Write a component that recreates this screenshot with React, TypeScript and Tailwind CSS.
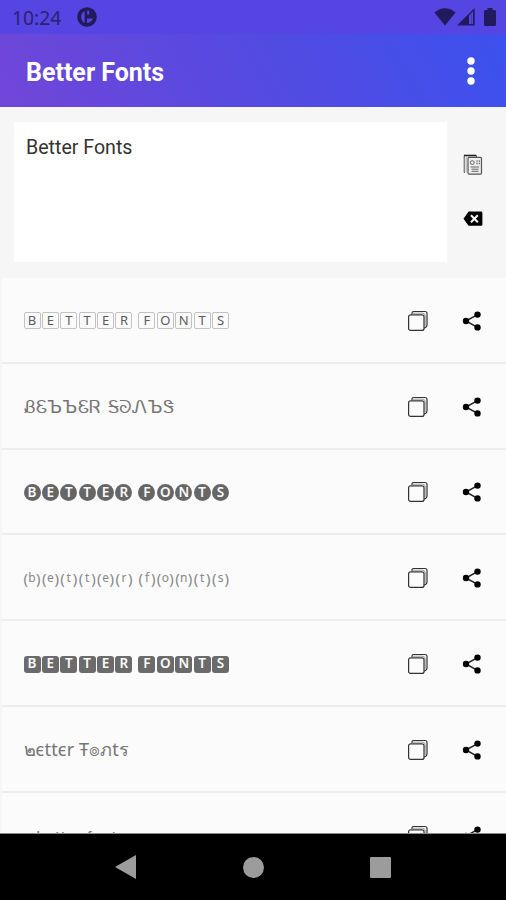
import type { ReactNode } from "react";

type TileKind = "box" | "circle" | "paren" | "solid";

const TILE_STYLES: Record<TileKind, string> = {
  box: "h-[17px] border border-[#c2c2c2] rounded-[2px] text-[#5c5c5c] text-[13px]",
  circle: "h-[17px] rounded-full bg-[#666666] text-[#fafafa] text-[13.5px] font-semibold",
  paren: "h-[17px] text-[#888888] text-[12px]",
  solid: "h-[17px] rounded-[3px] bg-[#6b6b6b] text-[#fafafa] text-[13.5px] font-semibold",
};

function Tiles({ text, kind }: { text: string; kind: TileKind }) {
  return (
    <div className="flex gap-[6px] font-['Noto_Sans',sans-serif]">
      {text.split(" ").map(word => (
        <div key={word} className="flex gap-[1.4px]">
          {word.split("").map((c, i) => (
            <span key={i} className={`flex w-[17px] items-center justify-center leading-none ${TILE_STYLES[kind]}`}>
              {kind === "paren" ? (
                <>
                  <span className="text-[15px]">(</span>
                  <span className="flex w-[8px] justify-center">{c}</span>
                  <span className="text-[15px]">)</span>
                </>
              ) : c}
            </span>
          ))}
        </div>
      ))}
    </div>
  );
}

function CopyIcon() {
  return (
    <svg width="22" height="22" viewBox="0 0 22 22" fill="none" stroke="#333333" strokeWidth="1.2">
      <path d="M5 4V3.2Q5 1.5 6.7 1.5H18Q20 1.5 20 3.5V15Q20 17 18 17.8H17" />
      <path d="M6 3.2H15.5Q18.2 3.2 18.2 6V16" stroke="#888888" strokeWidth="0.8" />
      <rect x="1.6" y="4.8" width="15.4" height="15.6" rx="2" fill="#fbfbfb" />
    </svg>
  );
}

function ShareIcon() {
  return (
    <svg width="20" height="20" viewBox="0 0 20 20" fill="#000000">
      <path d="M15.5 3.6 4 10 15.5 16.4" fill="none" stroke="#222222" strokeWidth="1.5" />
      <circle cx="4" cy="10" r="3.2" />
      <circle cx="15.5" cy="3.6" r="3.2" />
      <circle cx="15.5" cy="16.4" r="3.2" />
    </svg>
  );
}

function PasteIcon() {
  return (
    <svg width="20" height="22" viewBox="0 0 20 22" fill="none" stroke="#555555">
      <path d="M2 18.5H1.2V1.5H13.5V3" strokeWidth="1" />
      <path d="M1 1.5H13" stroke="#222222" strokeWidth="1.6" />
      <path d="M3.2 3V18.5" stroke="#999999" strokeWidth="0.8" />
      <rect x="5" y="3.3" width="13.5" height="16.8" rx="1" fill="#eeeeee" strokeWidth="1.2" />
      <circle cx="9.3" cy="8.6" r="1.9" strokeWidth="0.9" />
      <path d="M14 6.3V10.8M16.3 6.3V10.8" strokeWidth="1" strokeDasharray="1.6 0.8" />
      <path d="M7.5 13H16M8.5 15.2H15.5M8.5 17.3H15.5" strokeWidth="0.9" />
    </svg>
  );
}

function BackspaceIcon() {
  return (
    <svg width="20" height="16" viewBox="0 0 20 16">
      <path d="M5.6 .6H18Q19.4 .6 19.4 2V13.4Q19.4 14.8 18 14.8H5.6L.5 7.7Z" fill="#000000" />
      <path d="m8 4.2 6.8 7M14.8 4.2 8 11.2" stroke="#f6f6f6" strokeWidth="2" />
    </svg>
  );
}

function StatusBar() {
  return (
    <div className="flex h-[34px] shrink-0 items-center bg-[#5545e2] pl-3 pr-[10px] text-[#2a2171]">
      <span className="pt-[2px] font-['Noto_Sans',sans-serif] text-[19.3px] leading-none">10:24</span>
      <svg className="ml-[16px]" width="20" height="20" viewBox="0 0 20 20">
        <circle cx="10" cy="10" r="9.8" fill="#211a5c" />
        <path d="M7.6 4V16Q4.2 14 4.2 10T7.6 4ZM10.2 3.8H12.2V7.5H10.2ZM10 11.5H16Q14.5 15.3 10 16Z" fill="#5545e2" />
      </svg>
      <div className="ml-auto flex items-center">
        <svg width="22" height="18" viewBox="0 0 22 18" fill="#211a5c">
          <path d="M.4 4.5Q11-4 21.6 4.5L11 17.5Z" />
        </svg>
        <svg className="ml-[1px]" width="18" height="18" viewBox="0 0 18 18">
          <path d="M0 17.6 17.6 0V17.6Z" fill="#211a5c" />
          <path d="M12 7.5 16 3.5V16H12Z" fill="#5545e2" />
          <path d="M14.5 6V16" stroke="#4639b8" strokeWidth="1" />
        </svg>
        <svg className="ml-[9px]" width="12" height="18" viewBox="0 0 12 18" fill="#211a5c">
          <path d="M3.5 2V0H8.5V2H10.5Q12 2 12 3.5V16.5Q12 18 10.5 18H1.5Q0 18 0 16.5V3.5Q0 2 1.5 2Z" />
        </svg>
      </div>
    </div>
  );
}

function FontRow({ children }: { children: ReactNode }) {
  return (
    <div className="flex h-[85.8px] shrink-0 items-center border-b-2 border-[#ededed] pl-[21.5px] pr-[24px] pt-[2px]">
      <div className="flex-1 text-[#757575]">{children}</div>
      <CopyIcon />
      <div className="ml-[33px]">
        <ShareIcon />
      </div>
    </div>
  );
}

export default function App() {
  return (
    <div className="flex h-[900px] w-[506px] flex-col overflow-hidden bg-[#f6f6f6] font-[Roboto,sans-serif]">
      <StatusBar />
      <header className="flex h-[73px] shrink-0 items-center justify-between bg-[linear-gradient(60deg,#7146d8,#5a49df_40%,#3b51ed)] pl-[26px] pr-[31px]">
        <h1 className="pt-[3px] text-[25px] font-bold leading-none text-white">Better Fonts</h1>
        <svg width="8" height="28" viewBox="0 0 8 28" fill="#ffffff">
          <circle cx="4" cy="4" r="3.7" />
          <circle cx="4" cy="14" r="3.7" />
          <circle cx="4" cy="24" r="3.7" />
        </svg>
      </header>

      <section className="flex h-[171px] shrink-0 pl-[14px] pt-[15px]">
        <div className="h-[140px] w-[433px] bg-white px-3 pt-[15px] text-[19.6px] leading-[22px] text-[#333333]">Better Fonts</div>
        <div className="ml-4 flex flex-col items-center pt-[32px]">
          <PasteIcon />
          <div className="mt-[35px]">
            <BackspaceIcon />
          </div>
        </div>
      </section>

      <main className="ml-[2px] flex min-h-0 flex-1 flex-col overflow-hidden bg-[#fbfbfb]">
        <FontRow><Tiles text="BETTER FONTS" kind="box" /></FontRow>
        <FontRow><span className="font-['DejaVu_Sans',sans-serif] text-[18px] tracking-[0.35px]">ᏰᏋЪЪᏋᏒ ᎦᘐᏁЪᏕ</span></FontRow>
        <FontRow><Tiles text="BETTER FONTS" kind="circle" /></FontRow>
        <FontRow><Tiles text="better fonts" kind="paren" /></FontRow>
        <FontRow><Tiles text="BETTER FONTS" kind="solid" /></FontRow>
        <FontRow><span className="font-['Noto_Sans',sans-serif] text-[18px] tracking-[0.1px]">๒єttєr Ŧ๏ภtร</span></FontRow>
        <FontRow><div className="pl-[13px] pt-[3px] text-[15px] tracking-[1px]">better fonts</div></FontRow>
      </main>

      <nav className="flex h-[67px] shrink-0 items-center justify-between border-t border-[#8a8a8a] bg-black pl-[115px] pr-[115px]">
        <svg width="21" height="24" viewBox="0 0 21 24" fill="#9c9c9c"><path d="M0 12 21 0V24Z" /></svg>
        <div className="size-[21px] rounded-full bg-[#9c9c9c]" />
        <div className="size-[21px] rounded-[1px] bg-[#9c9c9c]" />
      </nav>
    </div>
  );
}
